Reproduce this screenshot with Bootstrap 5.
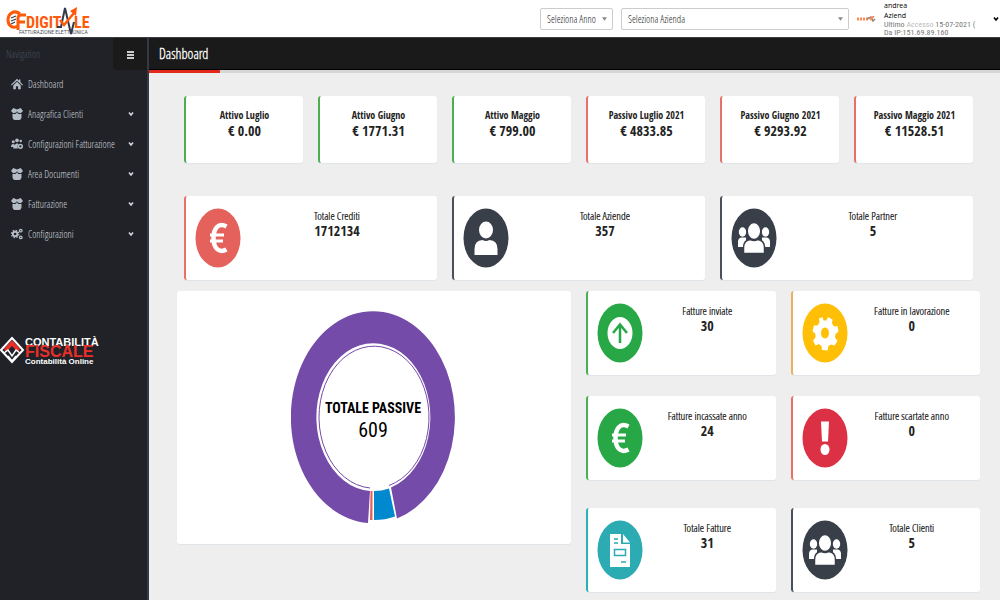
<!DOCTYPE html>
<html lang="it">
<head>
<meta charset="utf-8">
<meta name="viewport" content="width=device-width, initial-scale=1">
<title>Dashboard</title>
<link href="https://cdn.jsdelivr.net/npm/bootstrap@5.3.0/dist/css/bootstrap.min.css" rel="stylesheet">
<style>
:root{--cond:"Open Sans Condensed","Roboto Condensed",sans-serif;--thin:"Open Sans Condensed Light","Roboto Condensed",sans-serif}
body{background:#eee;font:10px/12px var(--thin);color:#222}
.topbar{height:38px;border-bottom:1px solid #3a3d42}
.picker{height:22px;width:73px;padding:0 12px 0 6px;font-size:10px;line-height:18px;border:1px solid #ccc;border-radius:2px;color:#222;background-position:right 5px center;background-size:5px 4px;
background-image:url("data:image/svg+xml,%3csvg xmlns='http://www.w3.org/2000/svg' viewBox='0 0 6 4'%3e%3cpath d='M0 0h6L3 4z' fill='%23888'/%3e%3c/svg%3e")}
.picker-wide{width:228px}
.account{width:143px;font:7px/10px "Open Sans",sans-serif;color:#000}
.account-meta{font:8px/8px "Roboto Condensed",sans-serif;color:#777}
.sidebar{width:149px;background:#202228;border-right:2px solid #343a44}
.side-head{height:31px;color:#46505c;padding-left:6px}
.toggler{width:34px;height:32px;background:#1a1a1a;color:#ccc;border-radius:0 0 0 4px}
.side-link{height:30px;padding:0 12px 0 11px;gap:5px;color:#d0d5db;font-size:10px}
.side-link:hover{color:#fff}
.side-icon{width:12px;height:12px;fill:#b4bcc5}
.side-logo{margin-top:87px}
.titlebar{height:32px;background:#1a1a1a;border-bottom:1px solid #000;color:#fff;padding-left:10px}
.titlebar h1{font:14px/18px var(--thin);-webkit-text-stroke:.3px}
.loader{height:3px;background:#d6d6d6;border-radius:0}
.loader .progress-bar{background:#e3281c}
.board{padding:23px 20px 8px 28px}
.board-inset{padding:0 7px 0 7px}
.board .row{--bs-gutter-x:15px}
.tile{background:#fff;border-radius:3px;border-left:2px solid var(--edge,#fff);box-shadow:0 1px 1px #dfe3e8;text-align:center;padding-top:12px}
.tile h2{font:11px/15px var(--thin);color:#000;margin:0;-webkit-text-stroke:.2px}
.tile strong{display:block;font:14px/15px var(--cond)}
.tile-mini{height:67px}
.tile-mini h2{font:10px/15px var(--cond);color:#222;-webkit-text-stroke:0}
.tile-stat{height:84px;padding:12px 4px 0 9px}
.tile-stat .disc{width:46px;height:60px;flex:none}
.green{--edge:#4cae50}.red{--edge:#e77068}.slate{--edge:#49505c}.amber{--edge:#e8b060}.teal{--edge:#2ab0b5}
.gap-mini{margin-bottom:33px}.gap-stat{margin-bottom:11px}
.stack-a{margin-bottom:21px}.stack-b{margin-bottom:28px}
.chart{height:253px;border-left:0;padding-top:19px}
</style>
</head>
<body>
<svg class="d-none" aria-hidden="true">
<symbol id="euro" viewBox="0 0 46 60"><path fill="none" stroke="#fff" stroke-width="4.5" d="M31.500 18.500C23 14 18.500 21 18.500 30S23 46 31.500 41.500"/><path stroke="#fff" stroke-width="3" d="M15 27h14M15 33h13"/></symbol>
<symbol id="people" viewBox="0 0 46 60"><g fill="#fff"><ellipse cx="11.500" cy="24" rx="3.700" ry="4.700"/><ellipse cx="34.500" cy="24" rx="3.700" ry="4.700"/><path d="M7 39V34q0-4.500 4-4.500h4V39zM39 39V34q0-4.500-4-4.500h-4V39z"/></g><g fill="#fff" stroke="#393f49" stroke-width="1.500"><ellipse cx="23" cy="23" rx="6.800" ry="8.600"/><path d="M12.500 45.500V40q0-8 7-8.500 3.500 2 7 0 7 .5 7 8.500v5.500z"/></g></symbol>
<symbol id="box" viewBox="0 0 16 16"><path d="M3 0l5 2 5-2 3 4-3 3-4-1-1-2-1 2-4 1-3-3zM2 8l4 0 2-2 2 2h4v5q-1 3-3 3H5q-2 0-3-3z"/></symbol>
<symbol id="chev" viewBox="0 0 8 8"><path d="M2 2.500L4 5l2-2.500" fill="none" stroke="currentColor" stroke-width="1.600"/></symbol>
</svg>

<header class="topbar bg-white d-flex align-items-center">
  <a href="#" class="me-auto" aria-label="CF Digitale"><svg width="100" height="37" class="d-block">
    <path d="M20 14C14 9 8 14 8 20s5 9 10 6" fill="none" stroke="#ff5a0a" stroke-width="3"/>
    <path d="M11 18l5-2M11 21l5-2M11 24l4-2" stroke="#333b4a" stroke-width="1.200"/>
    <path d="M26 15h-5q-3 0-3 3v12M18 22h7" fill="none" stroke="#ff5a0a" stroke-width="3"/>
    <text x="26" y="28" font-family="Roboto Condensed" font-weight="700" font-size="16" fill="#ff5a0a">DIGIT</text>
    <text x="74" y="28" font-family="Roboto Condensed" font-weight="700" font-size="16" fill="#ff5a0a">LE</text>
    <text x="19" y="34" font-family="Roboto" font-size="5" fill="#4a4f58">FATTURAZIONE ELETTRONICA</text>
    <path d="M57 27h4l4-19 6 26 3-12" fill="none" stroke="#333b4a" stroke-width="2"/>
    <path d="M60 20l4 5 10-12" fill="none" stroke="#ff5a0a" stroke-width="2.500"/><path d="M70 11l7-4-1 9z" fill="#ff5a0a"/>
  </svg></a>
  <select class="form-select picker me-2" aria-label="Anno"><option>Seleziona Anno</option></select>
  <select class="form-select picker picker-wide ms-0" aria-label="Azienda"><option>Seleziona Azienda</option></select>
  <div class="account d-flex align-items-center ms-2">
    <svg width="19" height="6" class="me-2 flex-shrink-0" viewBox="0 0 19 6"><path d="M0 3h11" stroke="#ff8a50" stroke-width="3" stroke-dasharray="2 1"/><path d="M10 3l4-2 2 4 2-2" fill="none" stroke="#8b8580" stroke-width="1.500"/><path d="M13 4l4-4" stroke="#ff8a50" stroke-width="2"/></svg>
    <div class="text-nowrap flex-grow-1"><div>andrea</div><div>Aziend</div>
      <div class="account-meta">Ultimo <span class="opacity-50">Accesso</span> 15-07-2021 (</div><div class="account-meta">Da IP:151.69.89.160</div></div>
    <svg width="8" height="8" class="flex-shrink-0"><use href="#chev"/></svg>
  </div>
</header>

<div class="d-flex">
  <nav class="sidebar flex-shrink-0">
    <div class="side-head d-flex justify-content-between"><span class="align-self-center">Navigation</span>
      <button class="toggler border-0 p-0" aria-label="Menu"><svg width="8" height="9"><path d="M1 1h7M1 4h7M1 7h7" stroke="currentColor" stroke-width="2"/></svg></button></div>
    <a href="#" class="side-link d-flex align-items-center text-decoration-none"><svg class="side-icon" viewBox="0 0 16 16"><path d="M8 1l2.500 2.500V2h2v3.500L16 9l-1 1-7-6.500L1 10 0 9zM8 5l5 5v5H9.500v-4h-3v4H3v-5z"/></svg><span>Dashboard</span></a>
    <a href="#" class="side-link d-flex align-items-center text-decoration-none"><svg class="side-icon"><use href="#box"/></svg><span class="me-auto">Anagrafica Clienti</span><svg width="8" height="8"><use href="#chev"/></svg></a>
    <a href="#" class="side-link d-flex align-items-center text-decoration-none"><svg class="side-icon" viewBox="0 0 16 16"><circle cx="3" cy="5" r="2"/><circle cx="8" cy="3" r="2.500"/><circle cx="13" cy="4" r="1.700"/><path d="M0 12q0-4 3-4l2 1 3-2 2 1q-2 2-1 6H3v-2z"/><circle cx="12.500" cy="11" r="2.500" fill="none" stroke="#b4bcc5" stroke-width="2"/></svg><span class="me-auto">Configurazioni Fatturazione</span><svg width="8" height="8"><use href="#chev"/></svg></a>
    <a href="#" class="side-link d-flex align-items-center text-decoration-none"><svg class="side-icon"><use href="#box"/></svg><span class="me-auto">Area Documenti</span><svg width="8" height="8"><use href="#chev"/></svg></a>
    <a href="#" class="side-link d-flex align-items-center text-decoration-none"><svg class="side-icon"><use href="#box"/></svg><span class="me-auto">Fatturazione</span><svg width="8" height="8"><use href="#chev"/></svg></a>
    <a href="#" class="side-link d-flex align-items-center text-decoration-none"><svg class="side-icon" viewBox="0 0 16 16"><g fill="none" stroke="#b4bcc5"><circle cx="5.500" cy="8" r="3" stroke-width="2.500"/><circle cx="5.500" cy="8" r="5" stroke-width="1.500" stroke-dasharray="2 1.930"/><circle cx="13" cy="3.500" r="1.700" stroke-width="1.800"/><circle cx="13" cy="12.500" r="1.700" stroke-width="1.800"/></g></svg><span class="me-auto">Configurazioni</span><svg width="8" height="8"><use href="#chev"/></svg></a>
    <a href="#" class="side-logo d-block" aria-label="Contabilità Fiscale"><svg width="104" height="30" class="d-block overflow-visible">
      <path d="M12 2l11 12-11 12L1 14z" fill="none" stroke="#fff" stroke-width="2"/><path d="M12 4l8 9-2 3-6-6-6 6-2-3z" fill="#e8302a"/><path d="M4 17l4-3 4 6 4-6 4 3M8 20l4 5 4-5" fill="none" stroke="#fff" stroke-width="1.500"/>
      <g font-family="Liberation Sans" font-weight="700" fill="#fff"><text x="25" y="10" font-size="11">CONTABILITÀ</text><text x="25" y="21" font-size="16" fill="#e8302a">FISCALE</text><text x="25" y="28" font-size="8">Contabilità Online</text></g>
    </svg></a>
  </nav>

  <main class="flex-grow-1">
    <div class="titlebar d-flex align-items-center"><h1 class="m-0">Dashboard</h1></div>
    <div class="progress loader" role="progressbar" aria-label="Caricamento"><div class="progress-bar" style="width:8.3%"></div></div>
    <div class="board">
      <div class="board-inset">
        <div class="row gap-mini">
          <div class="col-2"><div class="tile tile-mini green"><h2>Attivo Luglio</h2><strong>€ 0.00</strong></div></div>
          <div class="col-2"><div class="tile tile-mini green"><h2>Attivo Giugno</h2><strong>€ 1771.31</strong></div></div>
          <div class="col-2"><div class="tile tile-mini green"><h2>Attivo Maggio</h2><strong>€ 799.00</strong></div></div>
          <div class="col-2"><div class="tile tile-mini red"><h2>Passivo Luglio 2021</h2><strong>€ 4833.85</strong></div></div>
          <div class="col-2"><div class="tile tile-mini red"><h2>Passivo Giugno 2021</h2><strong>€ 9293.92</strong></div></div>
          <div class="col-2"><div class="tile tile-mini red"><h2>Passivo Maggio 2021</h2><strong>€ 11528.51</strong></div></div>
        </div>
        <div class="row gap-stat">
          <div class="col-4"><div class="tile tile-stat red d-flex"><svg class="disc"><ellipse cx="23" cy="30" rx="22.500" ry="29.500" fill="#e4625b"/><use href="#euro"/></svg><div class="flex-grow-1"><h2>Totale Crediti</h2><strong>1712134</strong></div></div></div>
          <div class="col-4"><div class="tile tile-stat slate d-flex"><svg class="disc"><ellipse cx="23" cy="30" rx="22.500" ry="29.500" fill="#393f49"/><ellipse cx="23" cy="22" rx="7" ry="8.500" fill="#fff"/><path d="M11.500 47V41q0-8.500 8-9 3.500 2 7 0 8 .5 8 9v6z" fill="#fff"/></svg><div class="flex-grow-1"><h2>Totale Aziende</h2><strong>357</strong></div></div></div>
          <div class="col-4"><div class="tile tile-stat slate d-flex"><svg class="disc"><ellipse cx="23" cy="30" rx="22.500" ry="29.500" fill="#393f49"/><use href="#people"/></svg><div class="flex-grow-1"><h2>Totale Partner</h2><strong>5</strong></div></div></div>
        </div>
      </div>
      <div class="row">
        <div class="col-6"><div class="tile chart">
          <svg width="166" height="222" role="img" aria-label="Totale passive 609">
            <path fill="#744ba8" d="M106 208.500A82 106 0 1 0 77 213L79 181A57 74 0 1 1 100 177.500z"/>
            <path fill="none" stroke="#744ba8" d="M79 178A55 71 0 1 1 98 175.500"/>
            <path fill="#0089cf" d="M83 181q8 0 15-2.500l6 28q-10 3.500-21 3.500z"/><path fill="#e4625b" d="M79.500 181h2v29h-2.500z"/>
            <g text-anchor="middle" fill="#000"><text x="82" y="103" font-family="Roboto Condensed" font-weight="700" font-size="14">TOTALE PASSIVE</text><text x="82" y="127" font-family="Roboto Condensed" font-size="20">609</text></g>
          </svg></div></div>
        <div class="col-6">
          <div class="row stack-a">
            <div class="col-6"><div class="tile tile-stat green d-flex"><svg class="disc"><ellipse cx="23" cy="30" rx="22.500" ry="29.500" fill="#27a745"/><ellipse cx="23" cy="30" rx="12.500" ry="16" fill="#fff"/><path d="M23 40V22M16 30l7-8.500 7 8.500" fill="none" stroke="#27a745" stroke-width="2.500"/></svg><div class="flex-grow-1"><h2>Fatture inviate</h2><strong>30</strong></div></div></div>
            <div class="col-6"><div class="tile tile-stat amber d-flex"><svg class="disc"><ellipse cx="23" cy="30" rx="22.500" ry="29.500" fill="#ffbf06"/><path fill="#fff" fill-rule="evenodd" d="M20.500 14l1 3.500h3l1.500-3.500 4.500 2.500-.5 4 2 3 3.500-.5 1 5.500-3 2.500-.5 3.500 2.500 3.500-3 4.500-3.500-1-2.500 1.500-1 4.500-5.500-.5-.5-4-2.500-2-3.500 1.500-2.500-5 2.500-3v-3.500l-3-3 1.500-5.500 3.500 0 2-3-.5-4zM23 24.500c-5.300 0-5.300 11 0 11s5.300-11 0-11z"/></svg><div class="flex-grow-1"><h2>Fatture in lavorazione</h2><strong>0</strong></div></div></div>
          </div>
          <div class="row stack-b">
            <div class="col-6"><div class="tile tile-stat green d-flex"><svg class="disc"><ellipse cx="23" cy="30" rx="22.500" ry="29.500" fill="#27a745"/><use href="#euro"/></svg><div class="flex-grow-1"><h2>Fatture incassate anno</h2><strong>24</strong></div></div></div>
            <div class="col-6"><div class="tile tile-stat red d-flex"><svg class="disc"><ellipse cx="23" cy="30" rx="22.500" ry="29.500" fill="#dc3144"/><path d="M19 13.500h8l-1 20h-6z" fill="#fff"/><ellipse cx="23" cy="41.500" rx="4.500" ry="5.500" fill="#fff"/></svg><div class="flex-grow-1"><h2>Fatture scartate anno</h2><strong>0</strong></div></div></div>
          </div>
          <div class="row">
            <div class="col-6"><div class="tile tile-stat teal d-flex"><svg class="disc"><ellipse cx="23" cy="30" rx="22.500" ry="29.500" fill="#2cabb3"/><path d="M13 14h11v10h9v23H13zM26 14l7 8.500h-7z" fill="#fff"/><path d="M17 19h4M17 23h4M24 42h5M17.500 29.500h11v6h-11z" fill="none" stroke="#2cabb3" stroke-width="1.500"/></svg><div class="flex-grow-1"><h2>Totale Fatture</h2><strong>31</strong></div></div></div>
            <div class="col-6"><div class="tile tile-stat slate d-flex"><svg class="disc"><ellipse cx="23" cy="30" rx="22.500" ry="29.500" fill="#393f49"/><use href="#people"/></svg><div class="flex-grow-1"><h2>Totale Clienti</h2><strong>5</strong></div></div></div>
          </div>
        </div>
      </div>
    </div>
  </main>
</div>
<script src="https://cdn.jsdelivr.net/npm/bootstrap@5.3.0/dist/js/bootstrap.bundle.min.js"></script>
</body>
</html>
